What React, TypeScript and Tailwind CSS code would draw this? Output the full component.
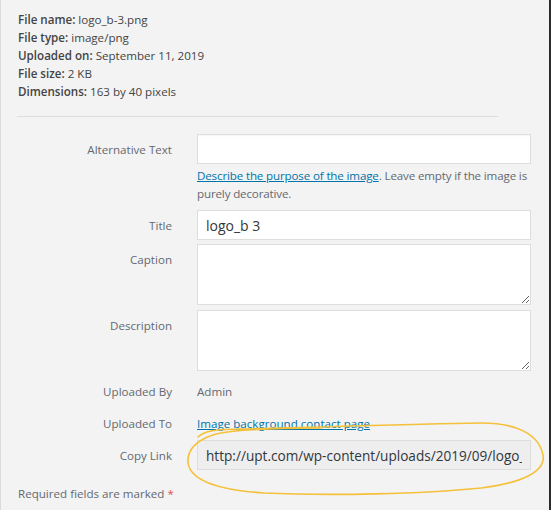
import React from 'react';

const labelCls = 'w-[154px] shrink-0 text-right text-[#646970]';

function Row({ label, children, pad = true }: { label: string; children: React.ReactNode; pad?: boolean }) {
  return (
    <div className="flex gap-[25px]">
      <div className={`${labelCls} ${pad ? 'pt-[7px]' : ''}`}>{label}</div>
      <div className="flex-1 min-w-0">{children}</div>
    </div>
  );
}

export default function App() {
  const info: [string, string][] = [
    ['File name:', 'logo_b-3.png'],
    ['File type:', 'image/png'],
    ['Uploaded on:', 'September 11, 2019'],
    ['File size:', '2 KB'],
    ['Dimensions:', '163 by 40 pixels'],
  ];

  return (
    <div className="relative h-[510px] w-[551px] overflow-hidden bg-[#f3f3f3] border-l border-[#dcdcdc] border-r-2 border-r-[#2b2b2b] font-['Open_Sans',sans-serif] text-[11.6px] leading-[18px] text-[#444]">
      <div className="pl-[17px] pr-[18px]">
        {/* file details */}
        <div className="pt-[11px]">
          {info.map(([k, v]) => (
            <div key={k}>
              <span className="font-semibold">{k}</span> {v}
            </div>
          ))}
        </div>

        <div className="mt-[15px] ml-[-1px] h-px w-[481px] bg-[#dddddd]" />

        {/* attachment fields */}
        <div className="mt-[17px]">
          <Row label="Alternative Text">
            <input className="block h-[30px] w-full border border-[#dddddd] bg-white shadow-[inset_0_1px_2px_rgba(0,0,0,0.04)] outline-none" />
            <p className="mt-[3px] tracking-[-0.15px] text-[#646970]">
              <a href="#" className="text-[#0073aa] underline">Describe the purpose of the image</a>. Leave empty if the image is purely decorative.
            </p>
          </Row>
        </div>

        <div className="mt-[7px]">
          <Row label="Title">
            <input
              defaultValue="logo_b 3"
              className="block h-[30px] w-full border border-[#dddddd] bg-white px-[8px] text-[14px] text-[#32373c] outline-none"
            />
          </Row>
        </div>

        <div className="mt-[4px]">
          <Row label="Caption">
            <textarea className="block h-[61px] w-full border border-[#dddddd] bg-white outline-none" />
          </Row>
        </div>

        <div className="mt-[5px]">
          <Row label="Description">
            <textarea className="block h-[61px] w-full border border-[#dddddd] bg-white outline-none" />
          </Row>
        </div>

        <div className="mt-[12px]">
          <Row label="Uploaded By" pad={false}>
            <span className="text-[#646970]">Admin</span>
          </Row>
        </div>

        <div className="mt-[14px]">
          <Row label="Uploaded To" pad={false}>
            <a href="#" className="text-[#0073aa] underline">Image background contact page</a>
          </Row>
        </div>

        <div className="mt-[7px]">
          <Row label="Copy Link">
            <input
              readOnly
              value="http://upt.com/wp-content/uploads/2019/09/logo_b-3.png"
              className="block h-[30px] w-full border border-[#dddddd] bg-[#eeeeee] px-[8px] text-[13.6px] text-[#32373c] outline-none"
            />
          </Row>
        </div>

        <p className="mt-[15px] text-[#646970]">
          Required fields are marked <span className="text-[#e05252]">*</span>
        </p>
      </div>

      {/* hand drawn highlight */}
      <svg className="pointer-events-none absolute left-0 top-0" width="551" height="510" viewBox="0 0 551 510" fill="none">
        <path
          d="M197 437 C203 431 215 429 240 429 C300 428 400 424 480 423 C515 423 538 434 542 455 C545 472 520 483 480 488 C420 494 330 496 263 493 C220 490 190 482 187 463 C186 450 195 440 215 434 C240 429 280 428 320 428"
          stroke="#f5c03a"
          strokeWidth="1.6"
          strokeLinecap="round"
        />
      </svg>
    </div>
  );
}
